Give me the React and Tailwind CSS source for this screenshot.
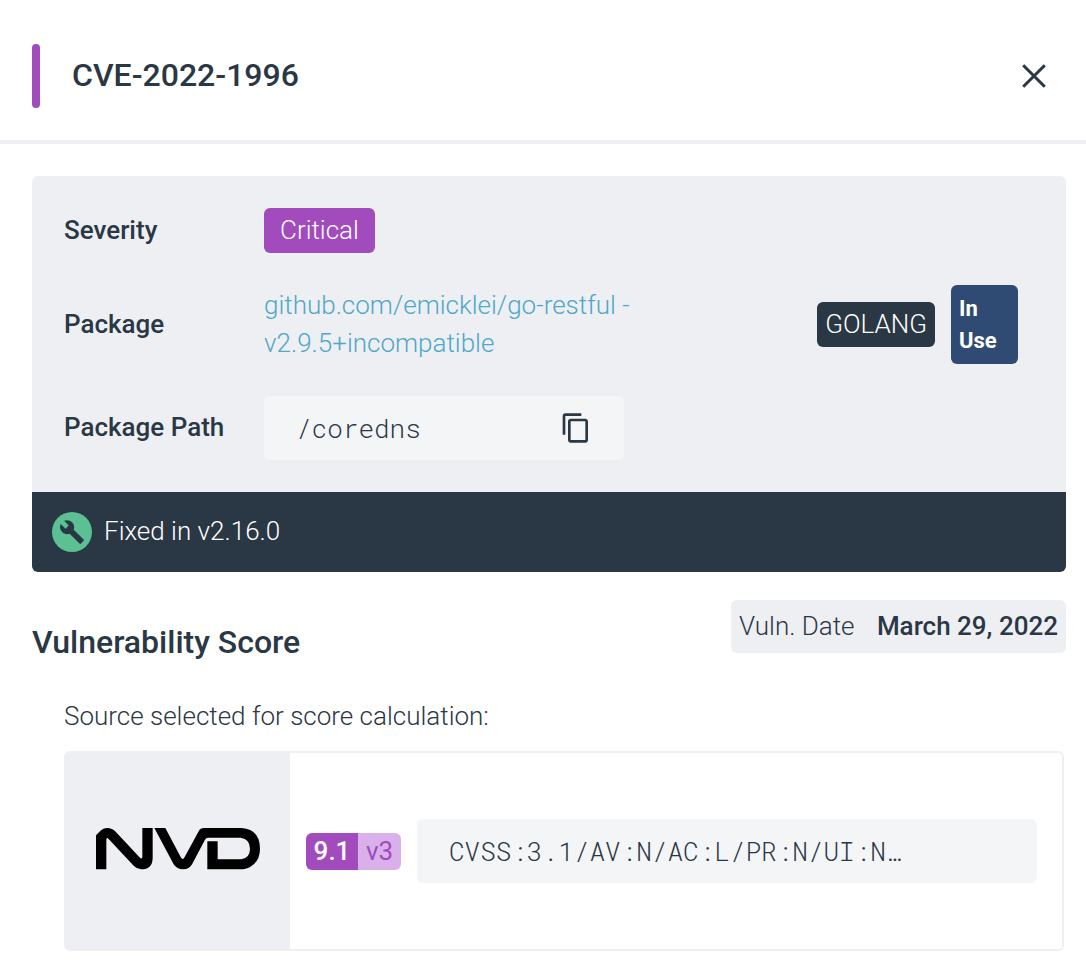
import { MdBuild, MdContentCopy } from "react-icons/md";

function CloseIcon() {
  return (
    <svg viewBox="0 0 24 24" className="size-6" fill="none" stroke="currentColor" strokeWidth="3" aria-hidden="true">
      <path d="M1.2 1.2 22.8 22.8M22.8 1.2 1.2 22.8" />
    </svg>
  );
}

function NvdLogo() {
  return (
    <svg viewBox="138 263 492 124" className="w-[164px]" role="img" aria-label="NVD">
      <path d="M138 387V285L153 270Q161 263 172 263Q186 263 197 274L270 352Q277 358 277 349V263H308V352Q308 387 273 387Q262 387 251 376L178 298Q169 288 169 299V387Z" />
      <path d="M313 263H346L392 350Q398 362 404 350L446 273Q451 263 462 263H575Q630 268 630 325Q630 375 580 387H472V303H503V357H574Q600 352 600 325Q600 296 572 292H474Q468 292 465 298L427 370Q418 387 400 387Q380 387 371 372Z" />
    </svg>
  );
}

function Row({ label, children }) {
  return (
    <div className="flex items-center">
      <dt className="w-[200px] shrink-0 pb-0.5 font-medium">{label}</dt>
      <dd className="flex min-w-0 flex-1 items-center">{children}</dd>
    </div>
  );
}

function Header() {
  return (
    <header className="flex items-center justify-between border-b-4 border-[#eeeff3] pt-11 pr-10 pb-8 pl-8">
      <div className="flex items-center gap-8">
        <span className="h-16 w-2 rounded bg-[#a14bbd]" />
        <h1 className="pb-0.5 text-[32px] leading-10 font-medium">CVE-2022-1996</h1>
      </div>
      <button type="button" aria-label="Close">
        <CloseIcon />
      </button>
    </header>
  );
}

function Summary() {
  return (
    <section className="overflow-hidden rounded-md">
      <dl className="flex flex-col gap-8 bg-[#eeeff3] py-8 pr-12 pl-8">
        <Row label="Severity">
          <span className="rounded-md bg-[#a14bbd] px-4 py-1 leading-[37px] text-white">Critical</span>
        </Row>
        <Row label="Package">
          <a href="#package" className="max-w-[400px] pb-0.5 text-[#4fa8c7]">
            github.com/emicklei/go-restful - v2.9.5+incompatible
          </a>
          <span className="ml-auto rounded-md bg-[#2a3744] px-2 py-1 leading-[37px] text-white">GOLANG</span>
          <span className="ml-4 w-[67px] rounded-md bg-[#2f4b73] px-2 pt-2 pb-[7px] text-[22px] leading-8 font-bold text-white">
            In Use
          </span>
        </Row>
        <Row label="Package Path">
          <div className="flex h-16 w-[360px] items-center justify-between rounded-md bg-[#f4f5f7] px-8 font-['Roboto_Mono','Liberation_Mono',monospace]">
            <span>/coredns</span>
            <button type="button" aria-label="Copy package path">
              <MdContentCopy className="size-8" />
            </button>
          </div>
        </Row>
      </dl>
      <div className="flex h-20 items-center gap-3 bg-[#2a3744] px-5 text-white">
        <span className="flex size-10 items-center justify-center rounded-full bg-[#5bc094] text-[#2a3744]">
          <MdBuild className="size-[26px]" />
        </span>
        <span className="pb-0.5">Fixed in v2.16.0</span>
      </div>
    </section>
  );
}

function Score() {
  return (
    <section className="mt-7">
      <div className="flex items-start justify-between">
        <h2 className="mt-[22px] text-[32px] leading-10 font-medium">Vulnerability Score</h2>
        <p className="rounded-md bg-[#eeeff3] px-2 py-2 leading-[37px]">
          Vuln. Date <strong className="ml-4 font-medium">March 29, 2022</strong>
        </p>
      </div>
      <div className="mt-[35px] pr-[2px] pl-8">
        <p>Source selected for score calculation:</p>
        <div className="mt-4 flex h-[200px] rounded-md border-2 border-[#eeeff3]">
          <div className="flex w-[224px] shrink-0 items-center justify-center bg-[#eeeff3] pb-1">
            <NvdLogo />
          </div>
          <div className="flex min-w-0 flex-1 items-center gap-4 pr-[25px] pl-4">
            <div className="flex w-[95px] shrink-0 overflow-hidden rounded-md text-center leading-[37px]">
              <span className="w-[52px] bg-[#a14bbd] font-medium text-white">9.1</span>
              <span className="flex-1 bg-[#d9b0ea] font-normal text-[#a14bbd]">v3</span>
            </div>
            <div className="flex h-16 min-w-0 flex-1 items-center rounded-md bg-[#f4f5f7] px-8 font-['Roboto_Mono','Liberation_Mono',monospace]">
              <span className="truncate">CVSS:3.1/AV:N/AC:L/PR:N/UI:N…</span>
            </div>
          </div>
        </div>
      </div>
    </section>
  );
}

export default function App() {
  return (
    <div className="min-h-screen bg-white font-[Roboto,sans-serif] text-[26px] leading-[38px] font-light text-[#2a3744]">
      <Header />
      <main className="pt-8 pr-5 pb-6 pl-8">
        <Summary />
        <Score />
      </main>
    </div>
  );
}
